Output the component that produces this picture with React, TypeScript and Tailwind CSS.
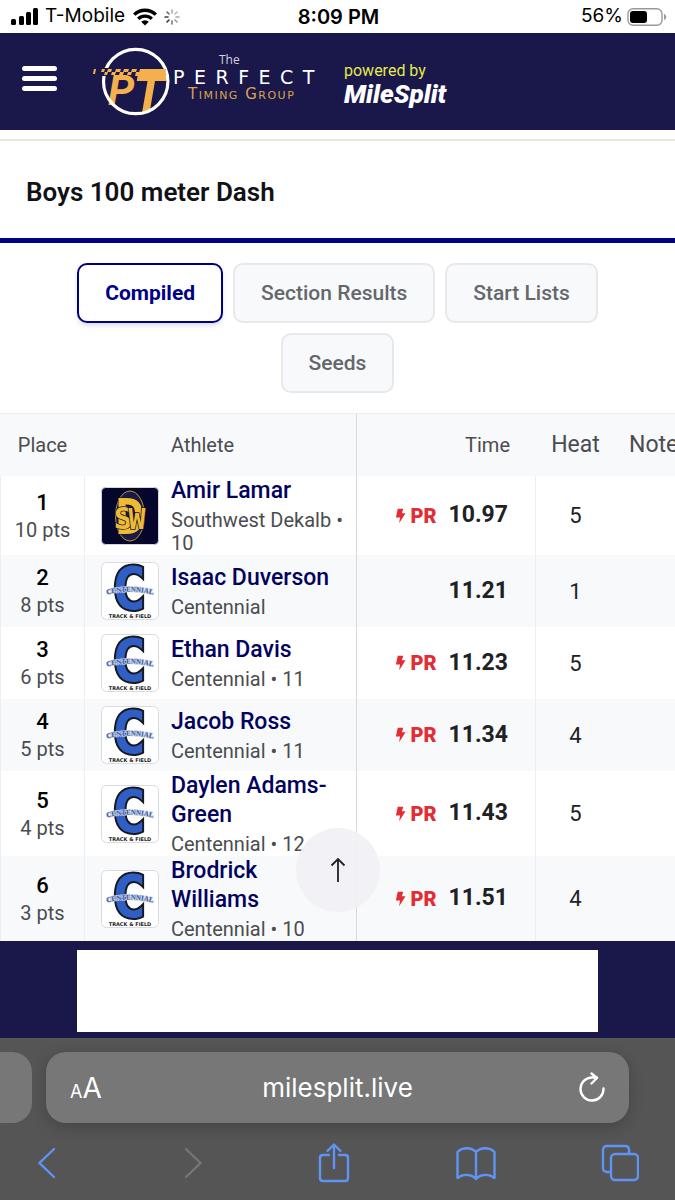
import { useId } from "react";

type Result = {
  place: number;
  points: number;
  name: string;
  team: string;
  time: string;
  heat: number;
  pr: boolean;
  school: "dekalb" | "centennial";
};

const results: Result[] = [
  { place: 1, points: 10, name: "Amir Lamar", team: "Southwest Dekalb • 10", time: "10.97", heat: 5, pr: true, school: "dekalb" },
  { place: 2, points: 8, name: "Isaac Duverson", team: "Centennial", time: "11.21", heat: 1, pr: false, school: "centennial" },
  { place: 3, points: 6, name: "Ethan Davis", team: "Centennial • 11", time: "11.23", heat: 5, pr: true, school: "centennial" },
  { place: 4, points: 5, name: "Jacob Ross", team: "Centennial • 11", time: "11.34", heat: 4, pr: true, school: "centennial" },
  { place: 5, points: 4, name: "Daylen Adams-Green", team: "Centennial • 12", time: "11.43", heat: 5, pr: true, school: "centennial" },
  { place: 6, points: 3, name: "Brodrick Williams", team: "Centennial • 10", time: "11.51", heat: 4, pr: true, school: "centennial" },
];

const tabs = ["Compiled", "Section Results", "Start Lists", "Seeds"];

const StatusBar = () => (
  <div className="grid h-[33px] grid-cols-3 items-center bg-white pl-[10px] pr-2 font-['Inter',sans-serif] text-[19px] text-black">
    <div className="flex items-center">
      <svg width="29" height="18" viewBox="0 0 29 18" aria-hidden="true">
        <rect x="1" y="11" width="5" height="6" rx="1.5" />
        <rect x="9" y="8" width="5" height="9" rx="1.5" />
        <rect x="16" y="4" width="5" height="13" rx="1.5" />
        <rect x="23" y="0" width="5" height="17" rx="1.5" />
      </svg>
      <span className="ml-[6px]">T-Mobile</span>
      <svg className="ml-2" width="24" height="18" viewBox="0 0 24 18" fill="none" stroke="black" strokeWidth="3.4" aria-hidden="true">
        <path d="M1.2 6.6a15.4 15.4 0 0 1 21.6 0" />
        <path d="M5.2 10.9a9.8 9.8 0 0 1 13.6 0" />
        <path d="M12 17.6 8.2 13.8a5.5 5.5 0 0 1 7.6 0z" fill="black" stroke="none" />
      </svg>
      <svg className="ml-[7px]" width="16" height="16" viewBox="-8 -8 16 16" strokeWidth="1.6" strokeLinecap="round" aria-hidden="true">
        <path d="M0-4v-3" stroke="#aaa" />
        <path d="m3-3 2-2" stroke="#bbb" />
        <path d="M4 0h3" stroke="#aaa" />
        <path d="m3 3 2 2" stroke="#999" />
        <path d="M0 4v3" stroke="#777" />
        <path d="m-3 3-2 2" stroke="#333" />
        <path d="M-4 0h-3" stroke="#444" />
        <path d="m-3-3-2-2" stroke="#666" />
      </svg>
    </div>
    <span className="text-center text-xl font-semibold">8:09 PM</span>
    <div className="flex items-center justify-end gap-1">
      <span>56%</span>
      <svg width="40" height="18" viewBox="0 0 40 18" aria-hidden="true">
        <rect x="1" y="0.8" width="34" height="16.4" rx="5" fill="none" stroke="#999" strokeWidth="1.4" />
        <rect x="3" y="3" width="17" height="12" rx="3" />
        <path d="M37 6c3 1 3 5 0 6z" fill="#999" />
      </svg>
    </div>
  </div>
);

const TimingMark = () => (
  <svg width="78" height="72" viewBox="92 46 78 72" aria-hidden="true">
    <g fill="#f3b04c" className="font-['Roboto',sans-serif] font-bold italic">
      <text x="108" y="105" fontSize="42">P</text>
      <text x="133" y="112" fontSize="52">T</text>
    </g>
    <circle cx="135.7" cy="81.5" r="32.2" fill="none" stroke="white" strokeWidth="3.2" />
    <path d="M98 68h13v8H98z" fill="#1a174a" />
    <g fill="#f3b04c">
      <path d="M94 69h2l-1 5h-2zM102 69h3l-1 3h-3zM108 69h4l-1 3h-4zM116 69h5l-1 3h-5zM124 69h5l-1 3h-5zM132 69h5l-1 3h-5z" />
      <path d="M105 72h3l-1 3h-3zM112 72h4l-1 3h-4zM120 72h4l-1 3h-4zM128 72h4l-1 3h-4zM136 72h4l-1 4h-4zM140 69h26l-1 7h-27z" />
    </g>
  </svg>
);

const SiteHeader = () => (
  <header className="flex h-[97px] items-center bg-[#1a174a] pl-[22px] text-white">
    <button type="button" aria-label="Menu" className="flex w-[35px] flex-col gap-[5px] pb-[6px]">
      <span className="h-[5px] rounded-full bg-white" />
      <span className="h-[5px] rounded-full bg-white" />
      <span className="h-[5px] rounded-full bg-white" />
    </button>
    <a href="#home" className="ml-[35px] flex items-center">
      <TimingMark />
      <span className="ml-[3px] flex w-[149px] flex-col pb-[9px] font-['DejaVu_Sans',sans-serif]">
        <span className="pl-[46px] font-['Open_Sans',sans-serif] text-xs leading-4 text-gray-300">The</span>
        <span className="text-[19px] leading-[18px] tracking-[0.5em]">PERFECT</span>
        <span className="pl-[15px] text-[15px] leading-4 tracking-widest text-[#d9a450] [font-variant:small-caps]">Timing Group</span>
      </span>
    </a>
    <a href="#milesplit" className="ml-[22px] flex flex-col pt-1 font-['Roboto',sans-serif]">
      <span className="text-base leading-5 text-[#e3ea4a]">powered by</span>
      <span className="text-[26px] leading-[26px] font-black italic">MileSplit</span>
    </a>
  </header>
);

const DekalbLogo = () => (
  <svg width="58" height="58" viewBox="0 0 58 58" className="shrink-0" role="img" aria-label="Southwest Dekalb">
    <rect x="0.5" y="0.5" width="57" height="57" rx="4" fill="#06052c" stroke="#d5d5dd" />
    <ellipse cx="29" cy="29" rx="14.500" ry="25" fill="#1b1a45" stroke="#b99a45" />
    <g fill="#eebb35" stroke="#14123a" strokeWidth="1.500" paintOrder="stroke" textAnchor="middle" fontFamily="DejaVu Sans Mono" fontWeight="bold">
      <text x="29" y="47" fontSize="49">D</text>
      <text x="22" y="42" fontSize="31">S</text>
      <text x="36" y="42" fontSize="28">W</text>
    </g>
  </svg>
);

const CentennialLogo = () => {
  const arc = useId();
  return (
    <svg width="58" height="58" viewBox="0 0 58 58" className="shrink-0" role="img" aria-label="Centennial Track and Field">
      <defs>
        <path id={arc} d="M1 34Q29 25 57 34" />
      </defs>
      <rect x="0.5" y="0.5" width="57" height="57" rx="5" fill="white" stroke="#d9dbe0" />
      <text x="28" y="47" fontSize="58" fontWeight="bold" textAnchor="middle" fontFamily="DejaVu Sans Mono" fill="#2f5fc4" stroke="#171a22" strokeWidth="4" paintOrder="stroke">C</text>
      <text fontSize="7" fontWeight="bold" textAnchor="middle" fontFamily="Liberation Serif" fill="#2f5ab0" stroke="#c3cbdc" strokeWidth="1.4" paintOrder="stroke">
        <textPath href={`#${arc}`} startOffset="50%">CENTENNIAL</textPath>
      </text>
      <text x="29" y="56" fontSize="5" fontWeight="bold" textAnchor="middle" fontFamily="DejaVu Sans" fill="#222">TRACK &amp; FIELD</text>
    </svg>
  );
};

const ResultRow = ({ result }: { result: Result }) => (
  <tr className="h-[72px] bg-white even:bg-[#f8f9fb]">
    <td className="border-x border-[#eceef2] p-0 text-center align-middle">
      <div className="text-[22px] leading-7 font-medium text-black">{result.place}</div>
      <div className="text-xl leading-[26px] text-[#4b4c50]">{result.points} pts</div>
    </td>
    <td className="border-r border-[#d8dade] p-0 align-middle">
      <div className="flex items-center gap-3 pr-3 pl-4">
        {result.school === "dekalb" ? <DekalbLogo /> : <CentennialLogo />}
        <div className="flex flex-col gap-1">
          <a href="#athlete" className="text-[23px] leading-[29px] font-medium text-[#02025f]">{result.name}</a>
          <span className="text-xl leading-[23px] text-[#4b4c50]">{result.team}</span>
        </div>
      </div>
    </td>
    <td className="border-r border-[#eceef2] p-0 pr-[27px] align-middle">
      <div className="flex items-center justify-end gap-3">
        {result.pr && (
          <span className="flex items-center gap-1 text-xl font-black text-[#e32c33]">
            <svg width="11" height="16" viewBox="0 0 12 16" fill="currentColor" aria-hidden="true">
              <path d="M3 0h6L7.500 5H11.500L4.500 16 5.500 9.500H1z" />
            </svg>
            PR
          </span>
        )}
        <span className="text-[23px] font-bold text-[#202124]">{result.time}</span>
      </div>
    </td>
    <td className="p-0 text-center align-middle text-[22px] text-[#202124]">{result.heat}</td>
    <td className="p-0" />
  </tr>
);

const Results = () => (
  <div className="relative">
    <div className="overflow-x-auto [scrollbar-width:none]">
      <table className="w-full min-w-[715px] table-fixed border-separate border-spacing-0">
        <colgroup>
          <col className="w-[85px]" />
          <col className="w-[272px]" />
          <col className="w-[179px]" />
          <col className="w-[79px]" />
          <col />
        </colgroup>
        <thead>
          <tr className="h-[63px] bg-[#f8f9fb] text-[#4b4c50] [&>th]:border-t [&>th]:border-t-[#eceef2]">
            <th className="p-0 text-xl font-normal">Place</th>
            <th className="border-r border-r-[#d8dade] p-0 pl-[86px] text-left text-xl font-normal">Athlete</th>
            <th className="p-0 pr-[26px] text-right text-xl font-normal">Time</th>
            <th className="p-0 text-[23px] font-normal">Heat</th>
            <th className="p-0 pl-[14px] text-left text-[23px] font-normal">Notes</th>
          </tr>
        </thead>
        <tbody>
          {results.map((result) => (
            <ResultRow key={result.place} result={result} />
          ))}
        </tbody>
      </table>
    </div>
    <button
      type="button"
      aria-label="Back to top"
      className="absolute bottom-[29px] left-1/2 flex size-[84px] -translate-x-1/2 items-center justify-center rounded-full bg-[#f0f0f6]/95"
    >
      <svg width="16" height="26" viewBox="0 0 16 26" fill="none" stroke="#202124" strokeWidth="1.8" aria-hidden="true">
        <path d="M8 25V2M1.500 8.500 8 2l6.500 6.500" />
      </svg>
    </button>
  </div>
);

const SafariBar = () => (
  <footer className="flex h-[162px] flex-col bg-[#555555] pt-[14px] font-['Inter',sans-serif]">
    <div className="flex h-[71px] gap-[14px] pr-[46px]">
      <div className="w-8 rounded-r-[20px] bg-[#777777]" />
      <div className="flex flex-1 items-center rounded-[20px] bg-[#777777] px-6 text-white shadow-[0_4px_16px_rgba(0,0,0,0.2)]">
        <button type="button" aria-label="Page settings" className="flex w-9 items-baseline">
          <span className="text-lg">A</span>
          <span className="text-[28px]">A</span>
        </button>
        <input aria-label="Address" defaultValue="milesplit.live" className="min-w-0 flex-1 bg-transparent text-center text-[26px] outline-none" />
        <button type="button" aria-label="Reload" className="flex w-9 justify-end">
          <svg width="28" height="32" viewBox="0 0 28 32" fill="none" stroke="white" strokeWidth="2.400" strokeLinecap="round" strokeLinejoin="round">
            <path d="M26.500 16.500A11.500 11.500 0 1 1 15 5.500h5M14.500 1.500l5.500 4.500L14.500 11.500" />
          </svg>
        </button>
      </div>
    </div>
    <nav className="mt-[18px] flex items-center justify-between pr-9 pl-7 text-[#5f93f5] [&_svg]:fill-none [&_svg]:stroke-current [&_svg]:stroke-[2.4]">
      <button type="button" aria-label="Back">
        <svg width="38" height="44" viewBox="0 0 38 44" strokeLinecap="round"><path d="M26 8 11.500 22 26 36" /></svg>
      </button>
      <button type="button" aria-label="Forward" className="text-[#757575]">
        <svg width="38" height="44" viewBox="0 0 38 44" strokeLinecap="round"><path d="M16 8 30.500 22 16 36" /></svg>
      </button>
      <button type="button" aria-label="Share">
        <svg width="38" height="44" viewBox="-2 0 38 44" strokeLinecap="round" strokeLinejoin="round">
          <path d="M14 14H8q-3 0-3 3v20q0 3 3 3h22q3 0 3-3V17q0-3-3-3h-6M19 27V4M12.500 10 19 3.500 25.500 10" />
        </svg>
      </button>
      <button type="button" aria-label="Bookmarks">
        <svg width="42" height="44" viewBox="-2 0 42 44" strokeLinejoin="round">
          <path d="M19 38C15 33 6 32.500 0.500 37V11C6 5.500 15 6.500 19 11c4-4.500 13-5.500 18.500 0v26C32 32.500 23 33 19 38zM19 11v27" />
        </svg>
      </button>
      <button type="button" aria-label="Tabs">
        <svg width="38" height="44" viewBox="0 0 38 44">
          <rect x="10" y="13" width="27" height="26" rx="4" />
          <path d="M10 31H6q-4 0-4-4V9q0-4 4-4h18q4 0 4 4v4" />
        </svg>
      </button>
    </nav>
  </footer>
);

const App = () => {
  return (
    <div className="w-full overflow-hidden bg-white font-['Roboto',sans-serif]">
      <StatusBar />
      <SiteHeader />
      <main>
        <div className="mt-[9px] flex h-[104px] items-center border-t-2 border-b-[5px] border-t-[#e8e8e8] border-b-[#000087] pt-[6px] pl-[26px]">
          <h1 className="text-[26px] font-semibold text-[#111216]">Boys 100 meter Dash</h1>
        </div>
        <div className="flex flex-wrap justify-center gap-[10px] px-16 py-5">
          {tabs.map((tab, index) => (
            <button
              key={tab}
              type="button"
              className={
                index === 0
                  ? "h-[60px] rounded-[10px] border-2 border-[#000087] bg-white px-[26px] pt-[2px] text-[21px] font-bold text-[#000087] shadow-md"
                  : "h-[60px] rounded-[10px] border-2 border-[#e6e8eb] bg-[#f8f9fb] px-[26px] pt-[2px] text-[21px] font-medium text-[#65676c]"
              }
            >
              {tab}
            </button>
          ))}
        </div>
        <Results />
        <aside className="bg-[#1a174a] px-[77px] pt-[9px] pb-[6px]">
          <div className="h-[82px] bg-white" />
        </aside>
      </main>
      <SafariBar />
    </div>
  );
};

export default App;
